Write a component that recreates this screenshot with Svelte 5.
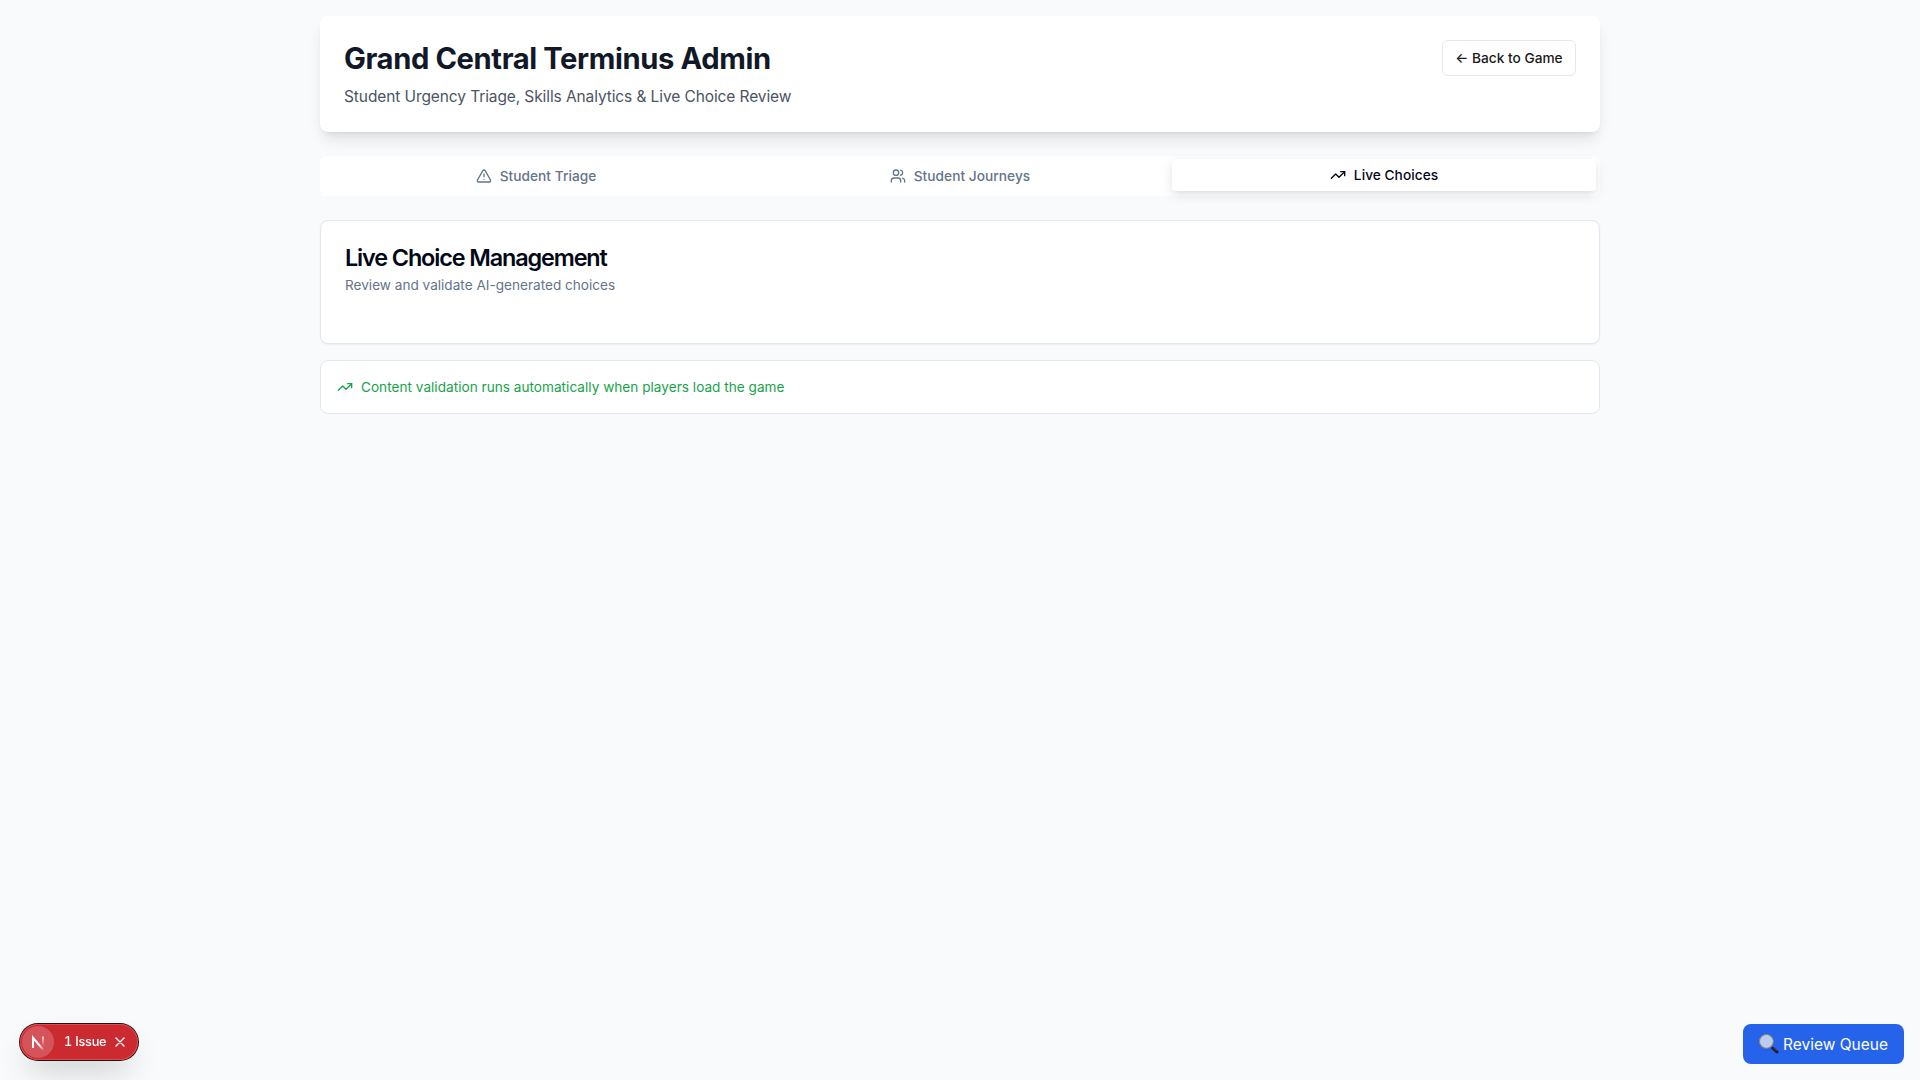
<script>
  const tabs = [
    { label: 'Student Triage', icon: 'alert' },
    { label: 'Student Journeys', icon: 'users' },
    { label: 'Live Choices', icon: 'trend' }
  ];
  let active = $state(2);
  let showIssue = $state(true);
</script>

{#snippet icon(name)}
  <svg class="icon" viewBox="0 0 24 24" fill="none" stroke="currentColor" stroke-width="2" stroke-linecap="round" stroke-linejoin="round">
    {#if name === 'alert'}
      <path d="m21.73 18-8-14a2 2 0 0 0-3.48 0l-8 14A2 2 0 0 0 4 21h16a2 2 0 0 0 1.73-3" />
      <path d="M12 9v4" /><path d="M12 17h.01" />
    {:else if name === 'users'}
      <path d="M16 21v-2a4 4 0 0 0-4-4H6a4 4 0 0 0-4 4v2" />
      <circle cx="9" cy="7" r="4" />
      <path d="M22 21v-2a4 4 0 0 0-3-3.87" /><path d="M16 3.13a4 4 0 0 1 0 7.75" />
    {:else}
      <path d="M16 7h6v6" /><path d="m22 7-8.5 8.5-5-5L2 17" />
    {/if}
  </svg>
{/snippet}

<main>
  <header>
    <div>
      <h1>Grand Central Terminus Admin</h1>
      <p>Student Urgency Triage, Skills Analytics &amp; Live Choice Review</p>
    </div>
    <button class="back">← Back to Game</button>
  </header>

  <div class="tabs" role="tablist">
    {#each tabs as tab, i}
      <button class="tab" class:active={active === i} role="tab" aria-selected={active === i} onclick={() => (active = i)}>
        {@render icon(tab.icon)}
        <span>{tab.label}</span>
      </button>
    {/each}
  </div>

  <section class="card">
    <h2>Live Choice Management</h2>
    <p>Review and validate AI-generated choices</p>
  </section>

  <section class="notice">
    {@render icon('trend')}
    <span>Content validation runs automatically when players load the game</span>
  </section>
</main>

{#if showIssue}
  <div class="issue">
    <span class="mark">
      <svg viewBox="0 0 32 32" fill="none">
        <defs>
          <linearGradient id="diag" x1="18" y1="18" x2="22.5" y2="24" gradientUnits="userSpaceOnUse">
            <stop stop-color="#fff" /><stop offset="1" stop-color="#fff" stop-opacity="0" />
          </linearGradient>
          <linearGradient id="stem" x1="21" y1="10" x2="21" y2="20" gradientUnits="userSpaceOnUse">
            <stop stop-color="#fff" /><stop offset="1" stop-color="#fff" stop-opacity="0" />
          </linearGradient>
        </defs>
        <path d="M11 22V11.8L21.4 24" stroke="url(#diag)" stroke-width="2" />
        <path d="M21 10.5v10.5" stroke="url(#stem)" stroke-width="1.6" />
      </svg>
    </span>
    <span class="count">1 Issue</span>
    <button class="close" aria-label="Close" onclick={() => (showIssue = false)}>
      <svg viewBox="0 0 14 14" fill="none" stroke="currentColor" stroke-width="1.3" stroke-linecap="round"><path d="M3 3l8 8M11 3l-8 8" /></svg>
    </button>
  </div>
{/if}

<button class="queue">
  <svg class="glass" viewBox="0 0 20 20" fill="none">
    <path d="M11.8 12.2l2.2 2.2" stroke="#8a8d91" stroke-width="1.6" />
    <path d="M13.6 14l4.4 4" stroke="#1d1d1f" stroke-width="3" stroke-linecap="round" />
    <path d="M13.8 13.4l4 3.6" stroke="#5c5c60" stroke-width=".6" />
    <circle cx="7.4" cy="7.4" r="6.8" fill="#bccbf1" stroke="#88888b" stroke-width="1.2" />
    <circle cx="7.4" cy="7.4" r="5.8" stroke="#c9cdd8" stroke-width=".8" />
  </svg>
  <span>Review Queue</span>
</button>

<style>
  :global(body) {
    background: #f9fafb;
    font-family: Inter, sans-serif;
    -webkit-font-smoothing: antialiased;
  }
  :global(*) { box-sizing: border-box; }
  button { font: inherit; border: 0; padding: 0; cursor: pointer; }
  h1, h2, p { margin: 0; }
  main {
    width: 1280px;
    margin: 0 auto;
    padding-top: 16px;
  }
  header {
    display: flex;
    justify-content: space-between;
    align-items: flex-start;
    height: 116px;
    padding: 24px;
    background: #fff;
    border-radius: 8px;
    box-shadow: 0 10px 15px -3px rgb(0 0 0 / 0.1), 0 4px 6px -4px rgb(0 0 0 / 0.1);
  }
  h1 { padding-top: 1px; font-size: 29.2px; line-height: 36px; font-weight: 700; letter-spacing: -0.4px; color: #111827; }
  header p { margin-top: 8px; font-size: 15.5px; line-height: 24px; letter-spacing: -0.1px; color: #4b5563; }
  .back {
    width: 134px;
    height: 36px;
    padding: 0;
    border: 1px solid #e2e8f0;
    border-radius: 6px;
    background: #fff;
    color: #1a1a1a;
    font-size: 13.7px;
    font-weight: 500;
    white-space: nowrap;
  }
  .icon { width: 16px; height: 16px; flex: none; }
  .tabs {
    display: grid;
    grid-template-columns: repeat(3, 1fr);
    height: 40px;
    margin-top: 24px;
    padding: 4px;
    border-radius: 6px;
    background: #fff;
  }
  .tab {
    display: flex;
    align-items: center;
    justify-content: center;
    gap: 8px;
    border-radius: 4px;
    background: transparent;
    color: #64748b;
    font-size: 13.7px;
    font-weight: 500;
    letter-spacing: 0.04px;
  }
  .tab span { line-height: 20px; padding-bottom: 1px; }
  .tab.active {
    background: #fff;
    color: #020817;
    transform: translateY(-1px);
    box-shadow: 0 4px 12px rgb(0 0 0 / 0.1), 0 3px 5px -2px rgb(0 0 0 / 0.06);
  }
  .card {
    height: 124px;
    margin-top: 24px;
    padding: 25px 24px 23px;
    border: 1px solid #e2e8f0;
    border-radius: 8px;
    background: #fff;
    box-shadow: 0 1px 2px rgb(0 0 0 / 0.05);
  }
  h2 { font-size: 23.4px; line-height: 24px; font-weight: 600; letter-spacing: -1.12px; color: #020817; }
  .card p { margin-top: 5px; font-size: 13.6px; line-height: 20px; color: #64748b; }
  .notice {
    display: flex;
    align-items: center;
    gap: 8px;
    height: 54px;
    margin-top: 16px;
    padding: 0 16px;
    border: 1px solid #e2e8f0;
    border-radius: 8px;
    background: #fff;
    color: #16a34a;
    font-size: 13.6px;
    line-height: 20px;
    letter-spacing: 0.02px;
  }
  .issue {
    position: fixed;
    left: 20px;
    bottom: 20px;
    display: flex;
    align-items: center;
    width: 118px;
    height: 36px;
    padding: 2px;
    border-radius: 18px;
    background: #ca2a30;
    color: #fff;
    box-shadow: 0 0 0 1px #171717, inset 0 0 0 1px #e5484d, 0 16px 32px -8px rgb(0 0 0 / 0.24);
  }
  .mark { width: 32px; height: 32px; border-radius: 50%; background: rgb(255 255 255 / 0.2); }
  .mark svg { display: block; width: 32px; height: 32px; }
  .count {
    width: 43px;
    margin-left: 10px;
    font-size: 12.7px;
    font-weight: 500;
    line-height: 16px;
    letter-spacing: -0.22px;
    font-variant-numeric: tabular-nums;
    white-space: nowrap;
  }
  .close { margin-left: 6px; width: 14px; height: 14px; background: none; color: #fff; }
  .close svg { display: block; width: 14px; height: 14px; }
  .queue {
    position: fixed;
    right: 16px;
    bottom: 16px;
    display: flex;
    align-items: center;
    gap: 4px;
    width: 161px;
    height: 40px;
    padding: 0 16px;
    border-radius: 8px;
    background: #2563eb;
    color: #fff;
    font-size: 15.5px;
    line-height: 24px;
    white-space: nowrap;
  }
  .queue span { padding-top: 2px; }
  .glass { width: 20px; height: 20px; }
</style>
